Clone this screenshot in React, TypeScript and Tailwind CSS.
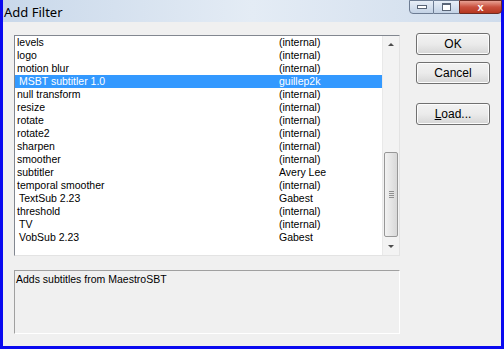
import React from "react";

const filters: [string, string, boolean?][] = [
  ["levels", "(internal)"],
  ["logo", "(internal)"],
  ["motion blur", "(internal)"],
  ["MSBT subtitler 1.0", "guillep2k", true],
  ["null transform", "(internal)"],
  ["resize", "(internal)"],
  ["rotate", "(internal)"],
  ["rotate2", "(internal)"],
  ["sharpen", "(internal)"],
  ["smoother", "(internal)"],
  ["subtitler", "Avery Lee"],
  ["temporal smoother", "(internal)"],
  ["TextSub 2.23", "Gabest", true],
  ["threshold", "(internal)"],
  ["TV", "(internal)", true],
  ["VobSub 2.23", "Gabest", true],
];

const Button = ({ children }: { children: React.ReactNode }) => (
  <button className="block w-[74px] h-[22px] rounded-[3px] border border-[#707070] bg-gradient-to-b from-[#f2f2f2] via-[#ebebeb] to-[#d6d6d6] text-[12px] text-black shadow-[inset_0_0_0_1px_#fcfcfc]">
    {children}
  </button>
);

export default function App() {
  return (
    <div
      className="w-[504px] h-[349px] bg-[#0a0af0] flex flex-col px-[3px] pb-[3px] overflow-hidden"
      style={{ fontFamily: '"Liberation Sans", Arial, sans-serif' }}
    >
      {/* title bar */}
      <div className="h-[22px] flex items-start justify-between bg-gradient-to-r from-[#c9d8ea] via-[#e4ecf5] to-[#cfdcec]">
        <span className="text-[13px] text-black pl-[1px] pt-[3px]" style={{ fontFamily: '"Noto Sans", sans-serif' }}>
          Add Filter
        </span>
        <div className="flex h-[14px] -mr-px">
          <div className="w-[25px] border border-[#6d7c93] rounded-bl-[4px] bg-gradient-to-b from-[#e7eef7] to-[#c3d2e5] flex items-center justify-center">
            <div className="w-[10px] h-[4px] border border-[#596577] bg-white"></div>
          </div>
          <div className="w-[25px] border-y border-[#6d7c93] bg-gradient-to-b from-[#e7eef7] to-[#c3d2e5] flex items-center justify-center">
            <div className="w-[9px] h-[8px] border border-[#596577] border-t-2 bg-white"></div>
          </div>
          <div className="w-[43px] border border-[#6d2b22] rounded-br-[4px] bg-gradient-to-b from-[#e7a093] via-[#c9503e] to-[#b6371f] flex items-center justify-center text-white text-[11px] font-bold leading-none">
            x
          </div>
        </div>
      </div>

      {/* client */}
      <div className="flex-1 bg-[#f0f0f0] pl-[11px] pt-[13px] flex gap-[16px]">
        <div className="flex flex-col gap-[14px]">
          <div className="w-[386px] h-[221px] border border-[#828790] border-b-[#e3e3e3] border-r-[#e3e3e3] bg-white flex">
            <div className="flex-1 text-[10.5px] text-black">
              {filters.map(([name, author, indent], i) => (
                <div
                  key={i}
                  className={`h-[13px] flex items-center leading-none ${
                    i === 3 ? "bg-[#3399ff] text-white" : ""
                  }`}
                >
                  <span className={`w-[264px] ${indent ? "pl-[4px]" : "pl-[2px]"}`}>{name}</span>
                  <span>{author}</span>
                </div>
              ))}
            </div>
            <div className="w-[17px] bg-[#f3f3f3] border-l border-[#e9e9e9] flex flex-col">
              <div className="h-[17px] flex items-center justify-center">
                <div className="w-0 h-0 border-l-[3px] border-r-[3px] border-b-[3px] border-l-transparent border-r-transparent border-b-[#4d4d4d]"></div>
              </div>
              <div className="flex-1 flex flex-col justify-end pb-[1px]">
                <div className="h-[85px] mx-[1px] rounded-[2px] border border-[#979797] bg-gradient-to-r from-[#f2f2f2] to-[#d8d8d8] flex flex-col items-center justify-center gap-[1px]">
                  <div className="w-[5px] h-px bg-[#8f8f8f]"></div>
                  <div className="w-[5px] h-px bg-[#8f8f8f]"></div>
                  <div className="w-[5px] h-px bg-[#8f8f8f]"></div>
                  <div className="w-[5px] h-px bg-[#8f8f8f]"></div>
                </div>
              </div>
              <div className="h-[17px] flex items-center justify-center">
                <div className="w-0 h-0 border-l-[3px] border-r-[3px] border-t-[3px] border-l-transparent border-r-transparent border-t-[#4d4d4d]"></div>
              </div>
            </div>
          </div>
          <div className="w-[386px] h-[64px] border border-[#a0a0a0] border-b-white border-r-white px-[1px] pt-[2px] text-[10.5px] text-black leading-[13px]">
            Adds subtitles from MaestroSBT
          </div>
        </div>
        <div className="flex flex-col mt-[-2px]">
          <Button>OK</Button>
          <div className="mt-[7px]">
            <Button>Cancel</Button>
          </div>
          <div className="mt-[19px]">
            <Button>
              <span className="underline">L</span>oad...
            </Button>
          </div>
        </div>
      </div>
    </div>
  );
}
